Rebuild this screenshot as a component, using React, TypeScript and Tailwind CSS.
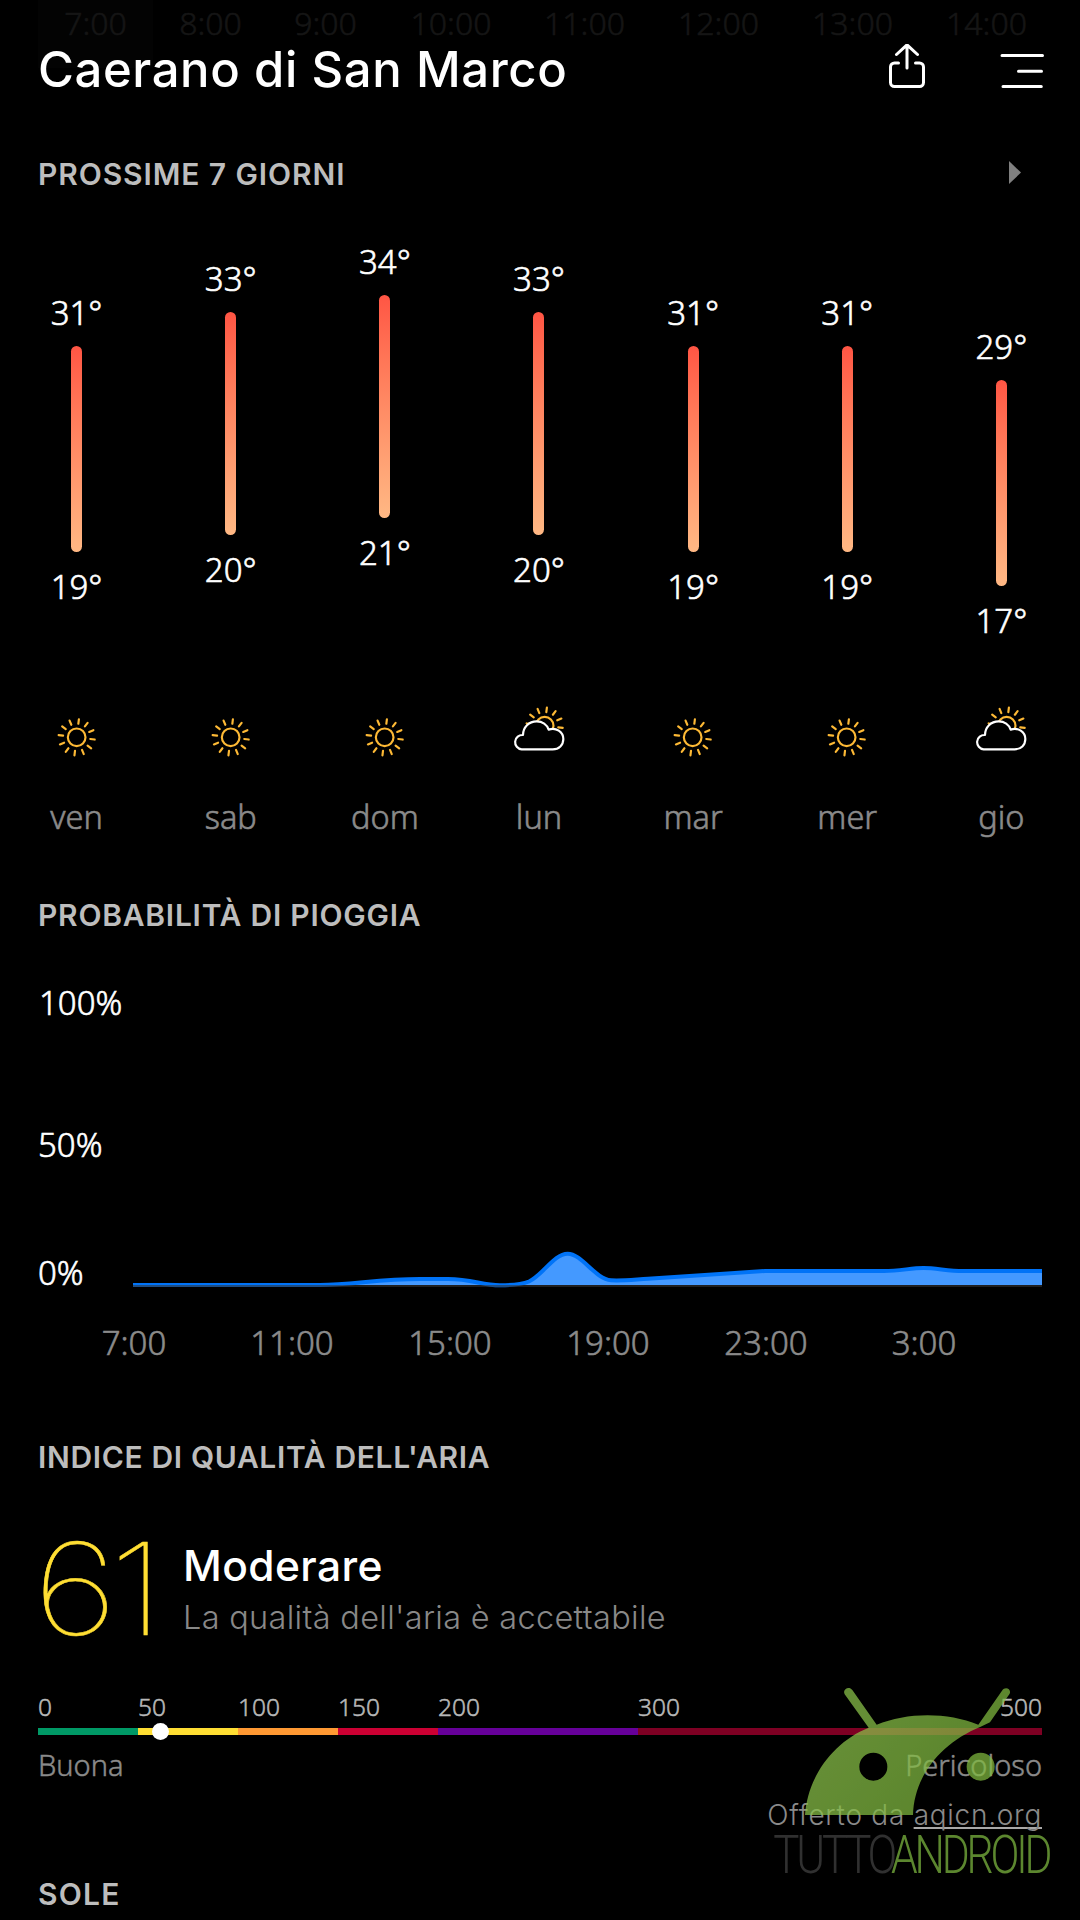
import clsx from "clsx";

const hours = [
  { label: "7:00", width: "w-[115px]" },
  { label: "8:00", width: "w-[115px]" },
  { label: "9:00", width: "w-[115px]" },
  { label: "10:00", width: "w-[136px]" },
  { label: "11:00", width: "w-[131px]" },
  { label: "12:00", width: "w-[137px]" },
  { label: "13:00", width: "w-[131px]" },
  { label: "14:00", width: "w-[137px]" },
];

const days = [
  { name: "ven", high: 31, low: 19, icon: "sun" },
  { name: "sab", high: 33, low: 20, icon: "sun" },
  { name: "dom", high: 34, low: 21, icon: "sun" },
  { name: "lun", high: 33, low: 20, icon: "cloud" },
  { name: "mar", high: 31, low: 19, icon: "sun" },
  { name: "mer", high: 31, low: 19, icon: "sun" },
  { name: "gio", high: 29, low: 17, icon: "cloud" },
];

const rainHours = ["7:00", "11:00", "15:00", "19:00", "23:00", "3:00"];

const aqiBands = [
  { from: "0", width: "w-[100px]", color: "bg-[#009966]" },
  { from: "50", width: "w-[100px]", color: "bg-[#ffde33]" },
  { from: "100", width: "w-[100px]", color: "bg-[#ff9933]" },
  { from: "150", width: "w-[100px]", color: "bg-[#cc0033]" },
  { from: "200", width: "w-[200px]", color: "bg-[#660099]" },
  { from: "300", width: "w-[404px]", color: "bg-[#7e0023]" },
];

const DEGREE = 17.1;
const MAX_HIGH = 34;
const MAX_LOW = 21;

function barTop(high: number) {
  return Math.round((MAX_HIGH - high) * DEGREE - 0.4);
}

function barBottom(low: number) {
  return 223 + Math.round((MAX_LOW - low) * DEGREE);
}

function SunShape({ cx, cy }: { cx: number; cy: number }) {
  const rays = Array.from({ length: 12 }, (_, i) => 7 + i * 30);
  return (
    <g stroke="#fdb935" strokeWidth="6.5" fill="none">
      <circle cx={cx} cy={cy} r="26.5" />
      {rays.map((deg) => (
        <line
          key={deg}
          x1={cx}
          y1={cy - 41}
          x2={cx}
          y2={cy - 54.5}
          strokeLinecap="round"
          transform={`rotate(${deg} ${cx} ${cy})`}
        />
      ))}
    </g>
  );
}

function WeatherIcon({ type }: { type: string }) {
  return (
    <svg className="h-[60px] w-[54px] shrink-0" viewBox="0 0 162 180">
      {type === "sun" ? (
        <SunShape cx={80} cy={112} />
      ) : (
        <>
          <SunShape cx={98} cy={77} />
          <path
            d="M29 148 A21.5 21.5 0 0 1 33 105 C33 81 51 64 74 64 C91 64 105 74 110 89 C132 81 154 96 154 117 C154 135 141 148 122 148 Z"
            fill="#000"
            stroke="#fff"
            strokeWidth="6.5"
            strokeLinejoin="round"
          />
        </>
      )}
    </svg>
  );
}

function ShareIcon() {
  return (
    <svg
      className="h-[49px] w-[41px]"
      viewBox="-0.5 0 41 49"
      fill="none"
      stroke="#fff"
      strokeWidth="3"
      strokeLinecap="round"
      strokeLinejoin="round"
    >
      <path d="M12 19H8a4 4 0 0 0-4 4v15.500a4 4 0 0 0 4 4h25a4 4 0 0 0 4-4V23a4 4 0 0 0-4-4h-4" />
      <path d="M20.500 24V1.500M10 10.500 20.500 0.800 31 10.500" />
    </svg>
  );
}

function MenuIcon() {
  return (
    <svg
      className="h-[49px] w-[46px]"
      viewBox="0 0 46 49"
      stroke="#fff"
      strokeWidth="3"
      strokeLinecap="round"
    >
      <path d="M3 11.600H43.500M19.500 27.200H42.500M4 42.400H42.300" />
    </svg>
  );
}

function SectionTitle({ children, className }: { children: string; className?: string }) {
  return (
    <h2
      className={clsx(
        "h-9 text-[30px] leading-9 font-semibold whitespace-nowrap text-[#bdbdbd]",
        className
      )}
    >
      {children}
    </h2>
  );
}

function HourStrip() {
  return (
    <div className="relative flex h-11 pt-px pl-[38px] font-['Noto_Sans'] text-[32px] leading-[44px] font-light text-[#151515] [-webkit-text-stroke:0.6px]">
      <div className="absolute top-0 left-[38px] h-[68px] w-[115px] bg-[#030303]" />
      {hours.map((h) => (
        <span key={h.label} className={clsx("relative shrink-0 text-center", h.width)}>
          {h.label}
        </span>
      ))}
    </div>
  );
}

function Forecast() {
  return (
    <div className="-ml-[0.5px] grid w-[1079px] grid-cols-7 font-['Noto_Sans'] font-light text-white [-webkit-text-stroke:0.6px]">
      {days.map((d) => (
        <div key={d.name} className="flex flex-col items-center">
          <div className="flex h-[508px] flex-col items-center pt-[50px] text-[33px] leading-[40px]">
            <span style={{ marginTop: barTop(d.high) }}>{d.high}°</span>
            <div
              className="mt-[13px] mb-[15px] w-[11px] shrink-0 rounded-full bg-linear-to-b from-[#ff5544] to-[#ffb884]"
              style={{ height: barBottom(d.low) - barTop(d.high) }}
            />
            <span>{d.low}°</span>
          </div>
          <WeatherIcon type={d.icon} />
          <span className="mt-9 text-[32.500px] leading-[41px] text-[#8a8a8a]">{d.name}</span>
        </div>
      ))}
    </div>
  );
}

function RainChart() {
  const line =
    "M133 1285 H320 C352 1285 378 1279 420 1279 H448 C472 1279 482 1285.300 500 1285.300 C512 1285.300 520 1285 529 1281.500 C543 1275 554 1253.700 567.700 1253.700 C582 1253.700 595 1279 611 1280.300 C622 1281 634 1279.600 648 1278.800 L765 1271 H884 C900 1271 911 1268 923.500 1268 C936 1268 948 1271 963 1271 H1042";
  return (
    <div className="mt-[50px] font-['Noto_Sans'] font-light [-webkit-text-stroke:0.6px]">
      <div className="flex h-[309px] pl-[38px]">
        <div className="flex w-[95px] flex-col text-[33px] leading-[40px] text-white">
          <span className="pl-px">100%</span>
          <span className="mt-[102px]">50%</span>
          <span className="mt-[88px]">0%</span>
        </div>
        <svg className="h-[309px] w-[909px]" viewBox="133 983 909 309">
          <path d={`${line} V1285 H133 Z`} fill="#4499ff" />
          <path d={line} fill="none" stroke="#0073f7" strokeWidth="4" />
          <rect x="133" y="1285" width="909" height="2" fill="#333" fillOpacity="0.6" />
        </svg>
      </div>
      <div className="mt-[31px] flex pl-[55px] text-[33px] leading-[40px] text-[#8a8a8a]">
        {rainHours.map((h) => (
          <span key={h} className="w-[158px] text-center">
            {h}
          </span>
        ))}
      </div>
    </div>
  );
}

function AirQuality() {
  return (
    <div className="mt-[64px] px-[38px]">
      <div className="flex h-[100px]">
        <span className="-ml-[5px] w-[150px] origin-left scale-x-[1.17] text-[128px] leading-[100px] font-thin tracking-[-7px] text-[#ffde33] [-webkit-text-stroke:0.5px]">
          61
        </span>
        <div className="flex flex-col pt-px whitespace-nowrap">
          <span className="text-[42.500px] leading-[52px] font-medium tracking-[0.4px] text-white">
            Moderare
          </span>
          <span className="text-[32.500px] leading-[52px] font-light tracking-[0.3px] text-[#888]">
            La qualità dell'aria è accettabile
          </span>
        </div>
      </div>

      <div className="mt-[53px] flex font-['Noto_Sans'] text-[24.500px] leading-[30px] font-light text-[#b8b8b8] [-webkit-text-stroke:0.5px]">
        {aqiBands.map((b, i) => (
          <span key={b.from} className={clsx("flex justify-between", b.width)}>
            {b.from}
            {i === aqiBands.length - 1 && <span>500</span>}
          </span>
        ))}
      </div>
      <div className="relative mt-1.5 flex h-[7px]">
        {aqiBands.map((b) => (
          <div key={b.from} className={clsx("h-full", b.width, b.color)} />
        ))}
        <div className="absolute top-[-5px] left-[114px] size-[17px] rounded-full bg-white" />
      </div>
      <div className="mt-3 flex justify-between font-['Noto_Sans'] text-[29px] leading-9 font-light text-[#8a8a8a] [-webkit-text-stroke:0.5px]">
        <span>Buona</span>
        <span>Pericoloso</span>
      </div>
      <div className="mt-3.5 text-right text-[28px] leading-9 font-light tracking-[0.72px] text-[#8a8a8a]">
        Offerto da{" "}
        <span className="underline decoration-[#a8a8a8] decoration-2 underline-offset-[2px] [text-decoration-skip-ink:none]">
          aqicn.org
        </span>
      </div>
    </div>
  );
}

function Watermark() {
  return (
    <svg
      className="absolute top-[1660px] left-[740px] h-[260px] w-[340px]"
      viewBox="0 0 1020 780"
    >
      <defs>
        <linearGradient id="head" x1="0" y1="0" x2="1" y2="0.5">
          <stop offset="0.3" stopColor="#8bc34a" />
          <stop offset="1" stopColor="#7cb53c" />
        </linearGradient>
      </defs>
      <g opacity="0.73">
        <path
          fill="url(#head)"
          fillRule="evenodd"
          d="M195 465 C203 350 280 245 386 203 L314 103 C306 88 327 76 337 90 L410 194 C500 157 620 155 715 194 L786 92 C796 77 817 88 808 103 L750 187 L722 200 C600 250 522 350 519 465 Z M442 320 a42 42 0 1 0 -84 0 a42 42 0 1 0 84 0 Z"
        />
        <circle cx="722" cy="320" r="42" fill="#80ba3f" />
      </g>
      <g fontFamily="Roboto" fontSize="162" fontWeight="300" letterSpacing="-12">
        <text x="100" y="638" textLength="362" lengthAdjust="spacingAndGlyphs" fill="#303030">
          TUTTO
        </text>
        <text x="453" y="638" textLength="475" lengthAdjust="spacingAndGlyphs" fill="#5c872f">
          ANDROID
        </text>
      </g>
    </svg>
  );
}

export default function App() {
  return (
    <div className="relative h-[1920px] w-[1080px] overflow-hidden bg-black font-['Inter',sans-serif]">
      <HourStrip />

      <header className="relative flex h-[49px] items-center pl-[38px]">
        <h1 className="flex-1 pt-px text-[49px] leading-[49px] font-medium tracking-[0.6px] whitespace-nowrap text-white">
          Caerano di San Marco
        </h1>
        <div className="flex w-[194px]">
          <ShareIcon />
          <div className="ml-[72px]">
            <MenuIcon />
          </div>
        </div>
      </header>

      <div className="mt-[63px] flex justify-between pr-[59px] pl-[38px]">
        <SectionTitle className="tracking-[0.9px]">PROSSIME 7 GIORNI</SectionTitle>
        <svg className="mt-[5px] h-[23px] w-3" viewBox="0 0 12 23">
          <path d="M0 0 12 11.500 0 23Z" fill="#808080" />
        </svg>
      </div>
      <Forecast />

      <SectionTitle className="mt-[60px] pl-[38px] tracking-[0.75px]">
        PROBABILITÀ DI PIOGGIA
      </SectionTitle>
      <RainChart />

      <SectionTitle className="mt-[76px] pl-[38px] tracking-[0.65px]">
        INDICE DI QUALITÀ DELL'ARIA
      </SectionTitle>
      <AirQuality />

      <SectionTitle className="mt-[43px] pl-[38px] tracking-[1.2px]">SOLE</SectionTitle>

      <Watermark />
    </div>
  );
}
